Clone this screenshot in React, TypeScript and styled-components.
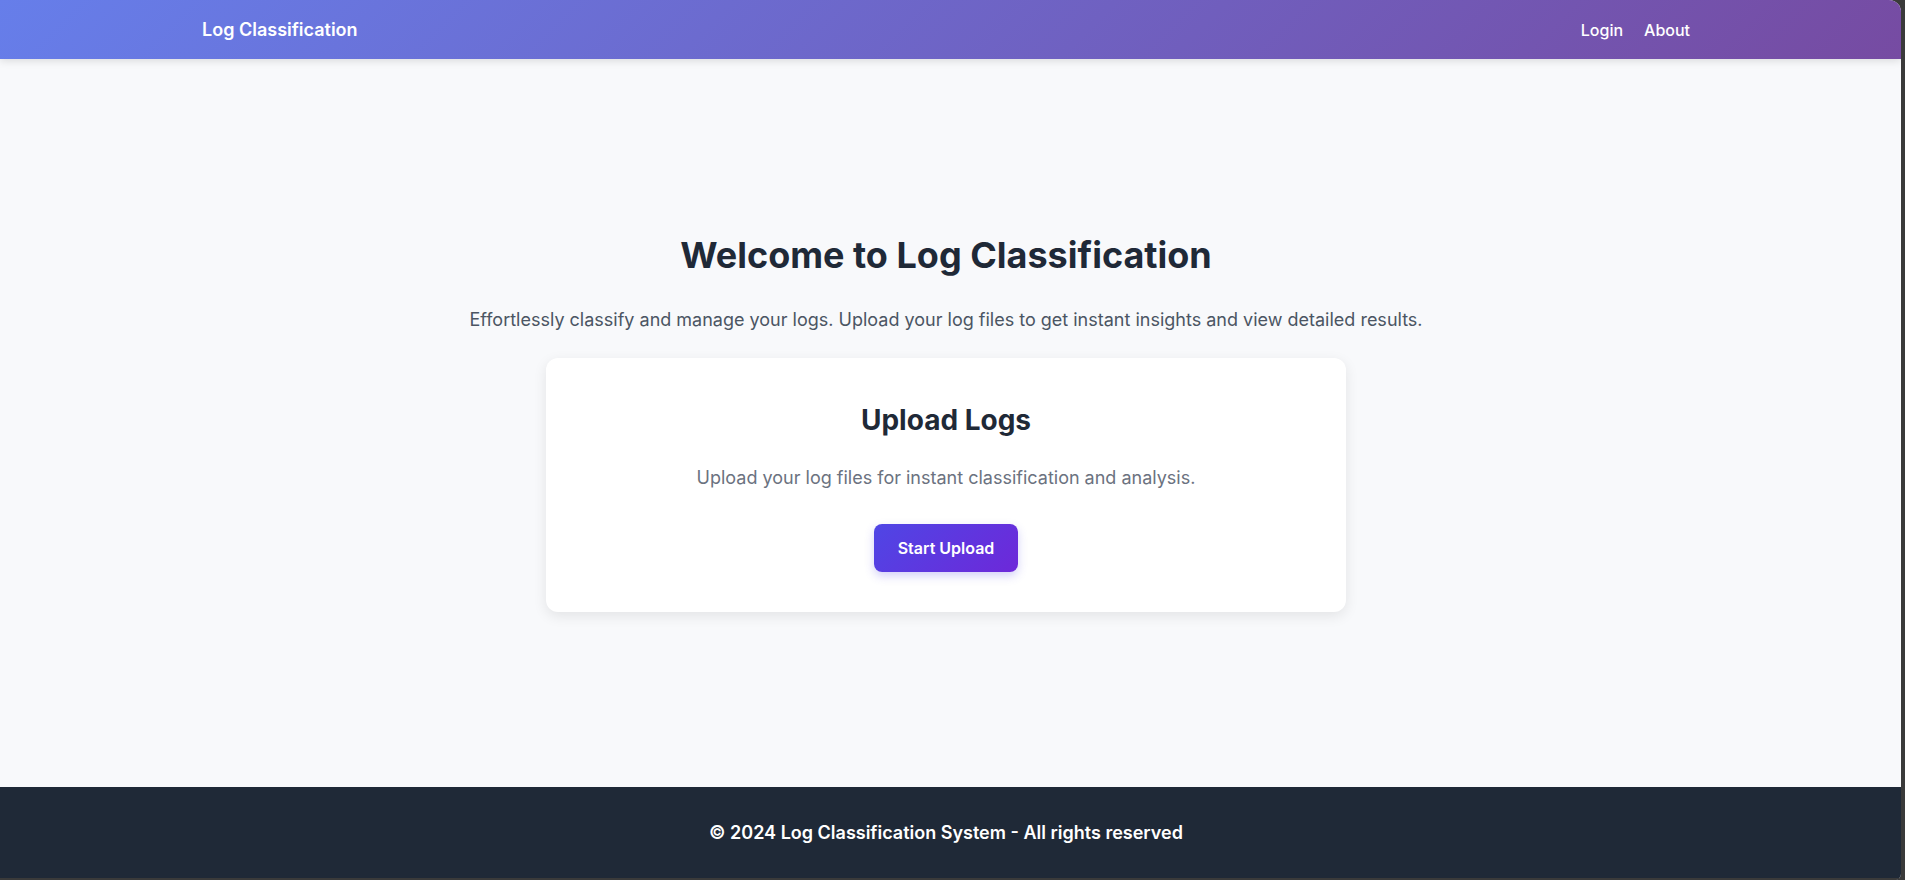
import React from "react";
import styled, { createGlobalStyle } from "styled-components";

const GlobalStyle = createGlobalStyle`
  * { box-sizing: border-box; }
  html, body { margin: 0; padding: 0; height: 100%; }
  body {
    background: #3a3a3a;
    font-family: Inter, "Noto Sans", "Liberation Sans", sans-serif;
    -webkit-font-smoothing: antialiased;
  }
`;

const Shell = styled.div`
  width: calc(100vw - 4px);
  height: 100vh;
  display: flex;
  flex-direction: column;
  background: #f8f9fb;
  border-radius: 0 12px 6px 0;
  overflow: hidden;
`;

const Header = styled.header`
  height: 59px;
  flex-shrink: 0;
  background: linear-gradient(135deg, #667eea 0%, #764ba2 100%);
  box-shadow: 0 2px 8px rgba(0, 0, 0, 0.12);
  padding-right: 1px;
  display: flex;
  align-items: center;
  position: relative;
  z-index: 1;
`;

const HeaderInner = styled.div`
  width: 100%;
  max-width: 1496px;
  margin: 0 auto;
  display: flex;
  align-items: center;
  justify-content: space-between;
`;

const Brand = styled.div`
  color: #ffffff;
  font-size: 18px;
  font-weight: 600;
  line-height: 27px;
`;

const Nav = styled.nav`
  display: flex;
  align-items: center;
  gap: 5px;
`;

const NavLink = styled.a`
  color: #ffffff;
  font-size: 16px;
  font-weight: 500;
  line-height: 24px;
  padding: 0 8px;
  text-decoration: none;
  cursor: pointer;
`;

const Main = styled.main`
  flex: 1;
  display: flex;
  flex-direction: column;
  align-items: center;
  justify-content: center;
  padding: 0 9px 1px 0;
`;

const Title = styled.h1`
  margin: 0;
  font-size: 36px;
  line-height: 44px;
  font-weight: 700;
  color: #1f2937;
  text-align: center;
`;

const Subtitle = styled.p`
  margin: 29px 0 0;
  font-size: 18px;
  line-height: 28px;
  color: #4b5563;
  text-align: center;
`;

const Card = styled.section`
  margin-top: 24px;
  width: 800px;
  background: #ffffff;
  border-radius: 12px;
  box-shadow: 0 4px 14px rgba(0, 0, 0, 0.09);
  padding: 40px 40px 40px;
  display: flex;
  flex-direction: column;
  align-items: center;
`;

const CardTitle = styled.h2`
  margin: 0;
  font-size: 28px;
  line-height: 44px;
  font-weight: 700;
  color: #1f2937;
`;

const CardText = styled.p`
  margin: 22px 0 0;
  font-size: 18px;
  line-height: 28px;
  color: #6b7280;
`;

const Button = styled.button`
  margin-top: 32px;
  height: 48px;
  padding: 0 24px;
  border: none;
  border-radius: 8px;
  background: linear-gradient(135deg, #4f46e5 0%, #6d28d9 100%);
  color: #ffffff;
  font-family: inherit;
  font-size: 16px;
  font-weight: 600;
  box-shadow: 0 4px 10px rgba(79, 70, 229, 0.25);
  cursor: pointer;
`;

const Footer = styled.footer`
  height: 93px;
  flex-shrink: 0;
  background: #1f2937;
  padding-right: 9px;
  display: flex;
  align-items: center;
  justify-content: center;
  border-bottom: 2px solid #3a3a3a;
`;

const FooterText = styled.p`
  margin: 0;
  color: #ffffff;
  font-size: 18px;
  font-weight: 600;
  line-height: 28px;
`;

export default function App() {
  return (
    <>
      <GlobalStyle />
      <Shell>
        <Header>
          <HeaderInner>
            <Brand>Log Classification</Brand>
            <Nav>
              <NavLink>Login</NavLink>
              <NavLink>About</NavLink>
            </Nav>
          </HeaderInner>
        </Header>
        <Main>
          <Title>Welcome to Log Classification</Title>
          <Subtitle>
            Effortlessly classify and manage your logs. Upload your log files to get instant insights and view detailed results.
          </Subtitle>
          <Card>
            <CardTitle>Upload Logs</CardTitle>
            <CardText>Upload your log files for instant classification and analysis.</CardText>
            <Button>Start Upload</Button>
          </Card>
        </Main>
        <Footer>
          <FooterText>© 2024 Log Classification System - All rights reserved</FooterText>
        </Footer>
      </Shell>
    </>
  );
}
